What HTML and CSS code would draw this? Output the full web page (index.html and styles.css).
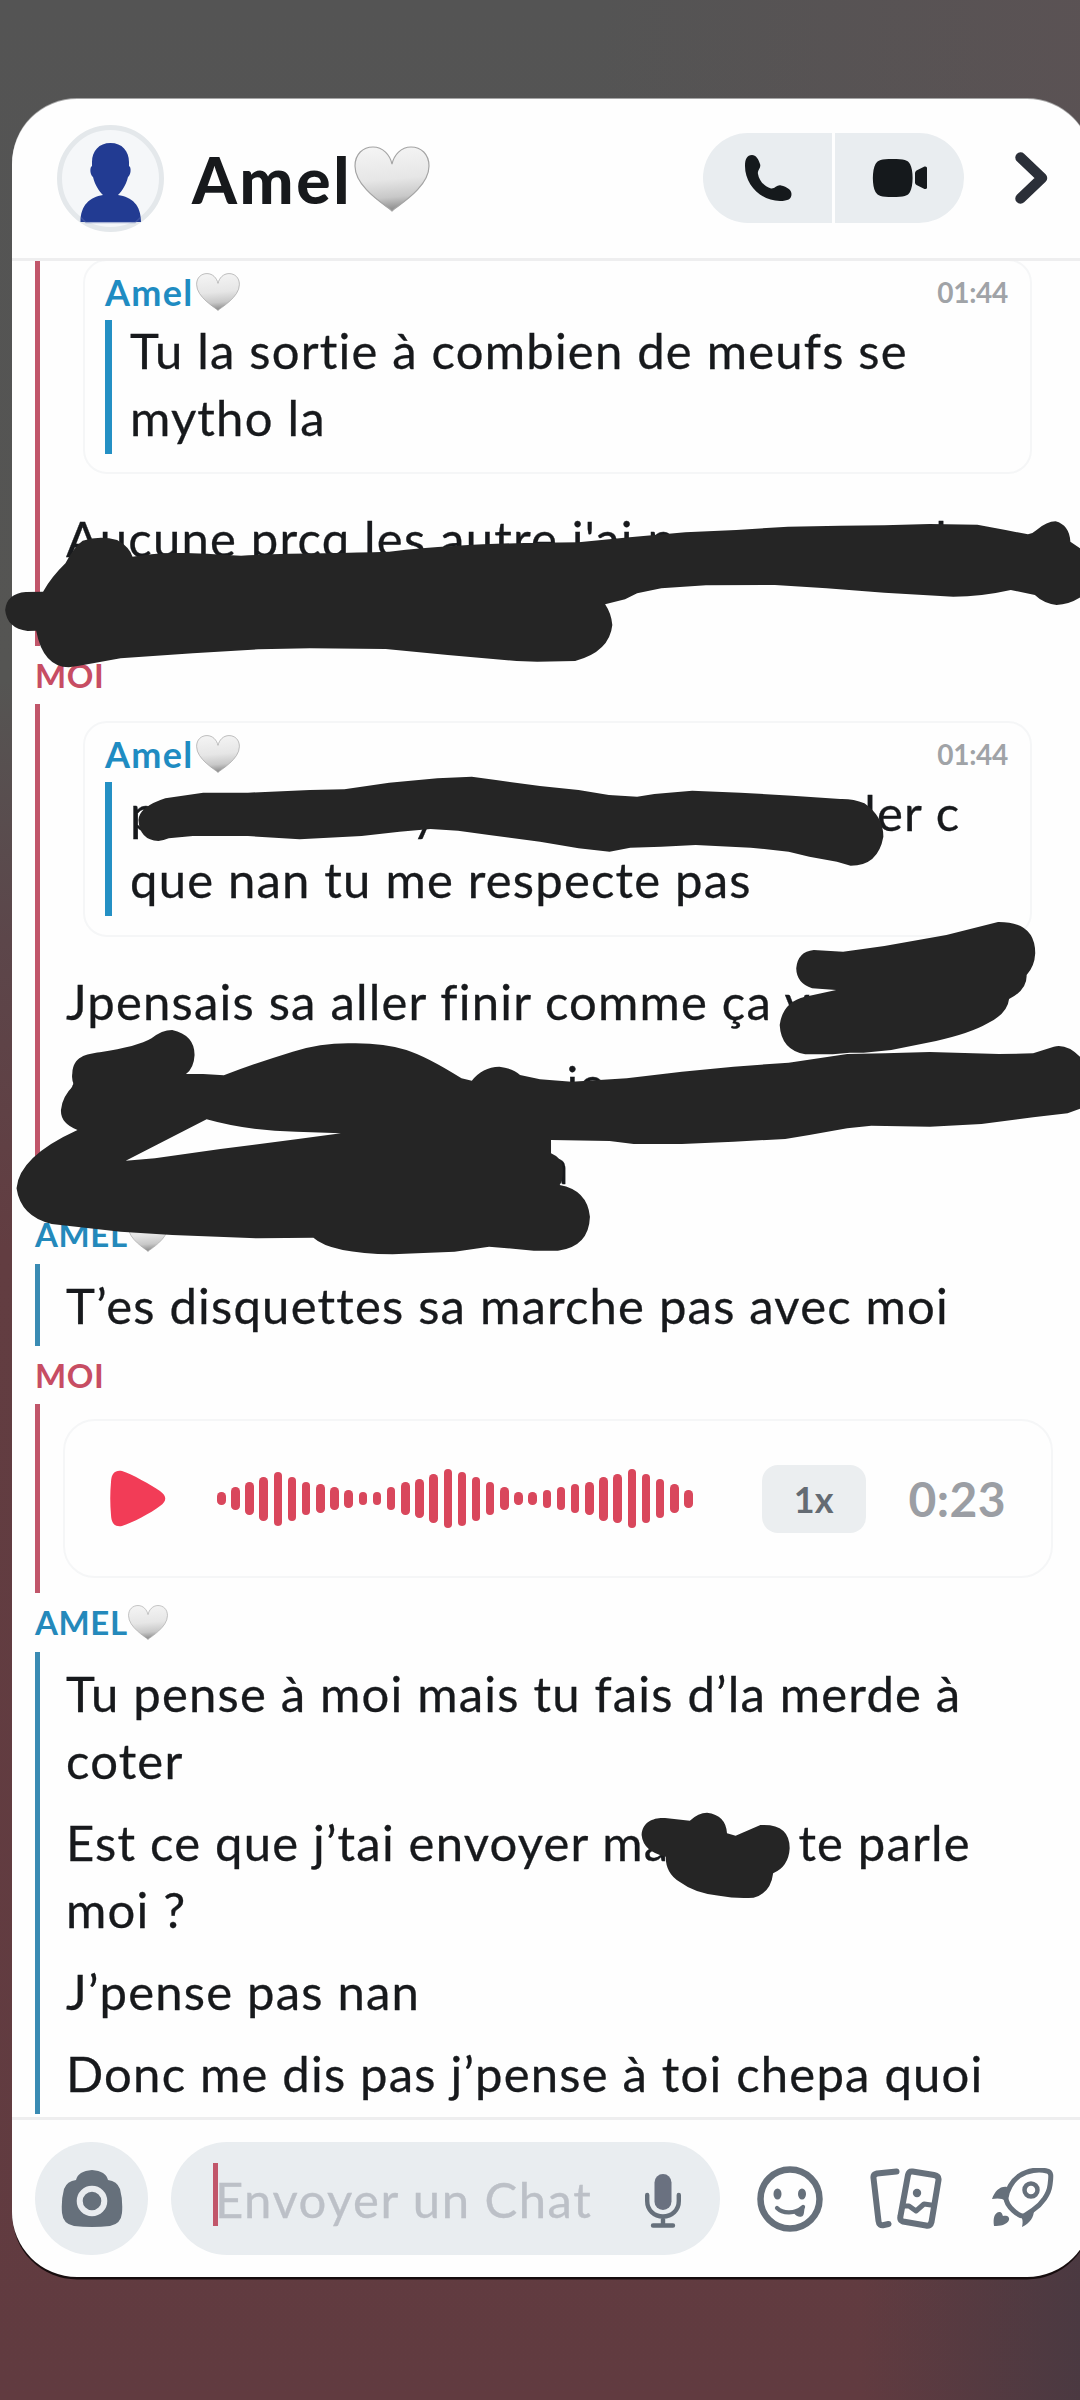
FILE: index.html
```html
<!DOCTYPE html>
<html lang="fr">
<head>
<meta charset="utf-8">
<title>Chat</title>
<link rel="stylesheet" href="styles.css">
</head>
<body>
<svg class="defs" width="0" height="0" aria-hidden="true">
  <defs>
    <linearGradient id="heartFill" x1="0.45" y1="0" x2="0.55" y2="1">
      <stop offset="0" stop-color="#f4f4f4"/>
      <stop offset="0.5" stop-color="#e6e6e6"/>
      <stop offset="0.78" stop-color="#c8c8c8"/>
      <stop offset="1" stop-color="#868686"/>
    </linearGradient>
    <symbol id="heart" viewBox="0 0 76 66" preserveAspectRatio="none">
      <path d="M38 65C33 60 1 42 1 20C1 8 9 1 19 1C29 1 36 9 38 18C40 9 47 1 57 1C67 1 75 8 75 20C75 42 43 60 38 65Z" fill="url(#heartFill)" stroke="#a4a4a4" stroke-width="1.2"/>
    </symbol>
  </defs>
</svg>
<main class="screen">
  <header class="header">
    <svg class="avatar" viewBox="0 0 107 107">
      <circle cx="53.500" cy="53.500" r="51" fill="#f5f7f9" stroke="#e4e8eb" stroke-width="5"/>
      <path d="M53.500 18C65 18 72 26 72 37V41C74.500 42 74 50 71 52C69 60 65 66 61 70C75 72 84 80 84 97H23.500C23.500 80 33 72 46 70C42 66 38 60 36 52C33 50 32.500 42 35 41V37C35 26 42 18 53.500 18Z" fill="#223b92"/>
      <path d="M24 92.500A50 50 0 0 0 29 97.500H78A50 50 0 0 0 83.500 92.500" fill="none" stroke="#5568ad" stroke-width="1.500" opacity=".5"/>
    </svg>
    <h1 class="title">Amel<svg class="heart"><use href="#heart"/></svg></h1>
    <div class="calls">
      <button class="call">
        <svg width="48" height="48" viewBox="0 0 48 48"><path d="M8 1C12 1 14.500 5 16 10C17.500 14 13 16 14 20C15 27 21 33 27 34.500C31 35 33 30.500 37 31.500C43 33 47.500 35.500 47.500 40C47.500 45 44 47 36 47C17 47 1 31 1 12C1 5 3 1 8 1Z" fill="#15191c"/></svg>
      </button>
      <button class="call">
        <svg width="56" height="40" viewBox="0 0 56 40"><path d="M20.500 1C32 1 36 2 38 6C41.500 12 41.500 28 38 34C36 38 32 39 20.500 39C9 39 6 38 3.500 34C0 28 0 12 3.500 6C6 2 9 1 20.500 1Z" fill="#15191c"/><path d="M43 15Q43 13.500 44.500 12.500L52.500 8.500Q55 8 55 10V29.500Q55 31.500 52.500 31L44.500 27Q43 26 43 24.500Z" fill="#15191c"/></svg>
      </button>
    </div>
    <svg class="next" viewBox="0 0 34 52"><path d="M5.500 5.500L27 26L5.500 46.500" fill="none" stroke="#2b2f38" stroke-width="10.500" stroke-linecap="round" stroke-linejoin="round"/></svg>
  </header>

  <section class="chat">
    <div class="group me first">
      <article class="message">
        <div class="quote">
          <div class="quote-head"><b>Amel</b><svg class="heart"><use href="#heart"/></svg><time>01:44</time></div>
          <blockquote><p>Tu la sortie à combien de meufs se<br>mytho la</p></blockquote>
        </div>
        <p>Aucune prcq les autre j'ai p<i class="gap g1"></i>l<br>&nbsp;</p>
      </article>
    </div>

    <h2 class="sender red">MOI</h2>
    <div class="group me">
      <article class="message">
        <div class="quote">
          <div class="quote-head"><b>Amel</b><svg class="heart"><use href="#heart"/></svg><time>01:44</time></div>
          <blockquote><p>p<i class="gap g2"></i>y<i class="gap g3"></i>ler c<br>que nan tu me respecte pas</p></blockquote>
        </div>
        <p>Jpensais sa aller finir comme ça v</p>
      </article>
      <article class="message"><p>A<i class="gap g4"></i>je</p></article>
      <article class="message"><p><i class="gap g5"></i>a</p></article>
    </div>

    <h2 class="sender blue">AMEL<svg class="heart"><use href="#heart"/></svg></h2>
    <div class="group them">
      <article class="message"><p>T’es disquettes sa marche pas avec moi</p></article>
    </div>

    <h2 class="sender red">MOI</h2>
    <div class="group me note">
      <div class="voice">
        <svg class="play" viewBox="0 0 56 57"><path d="M1 12C1.500 3 5 0 12 1C22 4 41 15 50 21C57 26 57 31 50 36C41 43 22 53 12 56C5 57 1.500 54 1 45C0 34 0 23 1 12Z" fill="#f23c57"/></svg>
        <div class="wave">
          <i style="height:13px"></i><i style="height:23px"></i><i style="height:33px"></i><i style="height:44px"></i><i style="height:54px"></i><i style="height:44px"></i><i style="height:33px"></i><i style="height:29px"></i><i style="height:23px"></i><i style="height:18px"></i><i style="height:13px"></i><i style="height:13px"></i><i style="height:23px"></i><i style="height:33px"></i><i style="height:39px"></i><i style="height:49px"></i><i style="height:59px"></i><i style="height:54px"></i><i style="height:44px"></i><i style="height:33px"></i><i style="height:23px"></i><i style="height:13px"></i><i style="height:13px"></i><i style="height:18px"></i><i style="height:23px"></i><i style="height:29px"></i><i style="height:33px"></i><i style="height:44px"></i><i style="height:49px"></i><i style="height:59px"></i><i style="height:49px"></i><i style="height:39px"></i><i style="height:29px"></i><i style="height:18px"></i>
        </div>
        <span class="speed">1x</span>
        <span class="length">0:23</span>
      </div>
    </div>

    <h2 class="sender blue">AMEL<svg class="heart"><use href="#heart"/></svg></h2>
    <div class="group them">
      <article class="message"><p>Tu pense à moi mais tu fais d’la merde à<br>coter</p></article>
      <article class="message"><p>Est ce que j’tai envoyer ma<i class="gap g6"></i>te parle<br>moi ?</p></article>
      <article class="message"><p>J’pense pas nan</p></article>
      <article class="message"><p>Donc me dis pas j’pense à toi chepa quoi</p></article>
    </div>
  </section>

  <footer class="composer">
    <button class="camera">
      <svg width="62" height="57" viewBox="0 0 62 57"><path d="M15 10Q17 1 31 0Q45 1 47 10Q56 11 59 19Q62 30 61 43Q60 54 49 56Q31 58 13 56Q2 54 1 43Q0 30 3 19Q6 11 15 10Z" fill="#66707b"/><circle cx="31" cy="31" r="12.300" fill="none" stroke="#e9ecef" stroke-width="6"/></svg>
    </button>
    <div class="field">
      <span class="caret"></span><span class="placeholder">Envoyer un Chat</span>
      <svg class="mic" viewBox="0 0 36 54"><rect x="9.500" y="0" width="17" height="36" rx="8.500" fill="#6a7180"/><path d="M2.200 21V27C2.200 36 9 42.500 18 42.500S33.800 36 33.800 27V21M18 43V51M8 51.500H28" fill="none" stroke="#66707b" stroke-width="4.400" stroke-linecap="round"/></svg>
    </div>
    <svg class="tool smile" viewBox="0 0 66 66"><circle cx="33" cy="33" r="29.500" fill="none" stroke="#66707b" stroke-width="6.500"/><ellipse cx="20.500" cy="28" rx="4" ry="5.500" fill="#66707b"/><ellipse cx="45" cy="28" rx="4" ry="5.500" fill="#66707b"/><path d="M20 42C26 48 38 48 46 41" fill="none" stroke="#66707b" stroke-width="4.200" stroke-linecap="round"/><path d="M37 46L47 41C46 45 47 51 43 50Q40 50 37 46Z" fill="#66707b" stroke="#66707b" stroke-width="1.500"/></svg>
    <svg class="tool stickers" viewBox="0 0 72 61"><g fill="none" stroke="#66707b" stroke-width="6" stroke-linecap="round" stroke-linejoin="round"><path d="M26.500 3.500L7 5.500Q3 6.500 3.500 10L8.500 53Q9 58 14 57L18.500 56"/><path d="M42.500 3.500L64 7Q69 8 68.500 12L61.500 54Q60.500 58.500 56 57.500L33 53.500Q29.500 52.500 30.500 48L38 7Q39 3 42.500 3.500Z"/><path d="M35 38L39 38L46 43L54 36L61 37" stroke-width="5"/></g><circle cx="47" cy="25" r="4.200" fill="#66707b"/></svg>
    <svg class="tool rocket" viewBox="0 0 62 60"><g fill="none" stroke="#66707b" stroke-width="5"><path d="M27 8C36 2 47 1 55 3C60 4 59 9 58 17C57 26 50 36 41 42L32 48C27 49 14 38 14 30C15 22 20 13 27 8Z" stroke-linejoin="round"/><circle cx="39" cy="22" r="6.500" stroke-width="4.500"/></g><path d="M15 19C8 18 3 23 0 31C5 30 10 30 14 33ZM42 42C42 49 38 55 30 59C31 54 31 51 28 47Z" fill="#66707b"/><path d="M2 58C1 51 2 45 7 44C10 44 10 46 11 48C14 47 18 48 17 52C15 57 8 58 2 58Z" fill="#66707b"/></svg>
  </footer>
</main>

<svg class="strokes" viewBox="0 0 1080 2400" aria-hidden="true">
  <g fill="#252525" fill-rule="evenodd">
    <path transform="translate(0 480) scale(.34439 .33333)" d="M15 390Q20 340 75 336L125 335Q150 290 190 250Q215 200 240 182Q290 165 340 180Q375 200 385 230C500 212 560 220 700 227C850 218 1000 220 1130 215C1300 195 1450 190 1568 188L1680 187L1828 172L1990 157L2138 150L2288 140L2440 137L2568 136L2700 132L2838 134L2920 150L2985 163Q3000 160 3010 150Q3040 124 3065 124Q3105 135 3108 185L3140 208V350Q3105 374 3068 375Q3030 370 3005 345L2935 330Q2850 350 2768 350L2568 338L2400 325L2250 315L2050 316L1920 325L1850 340L1815 358L1757 373Q1775 400 1778 435Q1770 515 1670 543L1560 545L1500 543L1300 525L1120 507L900 505L750 508L560 520L350 535L230 557L200 562Q125 560 105 452L80 453Q20 445 15 390Z"/>
    <path transform="translate(0 480) scale(.34439 .33333)" d="M402 1020Q405 980 480 955L590 938L720 938L900 930L1000 928L1130 908L1270 895L1370 890L1440 900L1568 918L1680 930L1768 945L1850 950L1900 942L2010 932L2150 938L2300 947L2440 957Q2478 956 2510 970Q2565 1010 2565 1070Q2550 1157 2470 1157L2430 1145L2350 1130L2290 1115L2180 1103L2020 1095L1920 1100L1830 1103L1770 1115L1680 1105L1568 1085L1420 1065L1330 1052L1250 1047L1160 1055L1050 1068L870 1078L720 1068L560 1068L490 1075Q475 1081 460 1083Q405 1080 402 1020Z"/>
    <path transform="translate(540 900) scale(.34439 .33333)" d="M744 205Q748 155 795 150L880 155L1000 138L1180 105L1330 66Q1438 65 1438 160Q1436 200 1413 225Q1415 270 1362 297Q1358 340 1300 370Q1250 400 1150 423L1020 450L940 458L900 458L850 463L770 463Q700 450 696 375Q705 305 770 290L860 270L790 265Q745 250 744 205Z"/>
    <path transform="translate(0 920) scale(.34439 .33333)" d="M210 460C212 410 250 402 290 397Q400 380 440 355Q470 330 500 330Q565 345 565 405Q563 445 540 462L590 462L650 466Q740 430 850 395Q930 370 1010 370Q1110 367 1180 390Q1240 410 1340 475L1370 482Q1400 442 1450 440Q1490 445 1510 465L1568 478L1660 485L1820 475L1980 455L2130 440L2290 428L2460 402L2570 400L2700 396L2900 402L3000 400L3060 380Q3100 370 3140 415V565L3100 580L3000 592L2850 612L2700 620L2530 617L2460 625L2350 645L2280 657L2130 665L1980 672L1840 672L1770 663L1600 660V700Q1634 715 1634 745Q1636 780 1625 795Q1705 810 1713 890Q1710 980 1620 992L1550 992L1420 980L1320 995L1140 1003Q960 1000 910 953L750 955L500 945L350 935L150 912Q60 890 48 805Q55 710 225 630Q175 610 177 570Q180 530 215 495Q207 480 210 460ZM600 598Q720 633 860 635L990 640L860 658L640 687L450 715L365 722Z"/>
    <path transform="translate(540 1660) scale(.34439 .33333)" d="M295 525C297 480 340 470 370 475L435 482Q460 458 485 458Q540 465 543 520L568 527L640 495Q725 490 725 565Q722 620 677 640Q670 700 620 713Q570 717 520 707Q450 700 405 665Q365 640 365 590Q300 575 295 525Z"/>
  </g>
</svg>
</body>
</html>
```
FILE: styles.css
```css
* { box-sizing: border-box; }

body {
  position: relative;
  width: 1080px;
  height: 2400px;
  margin: 0;
  overflow: hidden;
  font-family: Lato, "Liberation Sans", sans-serif;
  color: #17191c;
  background:
    linear-gradient(to right, rgba(60, 56, 66, 0) 860px, rgba(60, 56, 66, .6) 1080px) 0 2200px / 1080px 200px no-repeat,
    linear-gradient(to right, rgba(98, 80, 84, 0) 600px, rgba(98, 80, 84, .45) 1080px) 0 0 / 1080px 200px no-repeat,
    linear-gradient(to bottom, #545454 0, #555553 680px, #5c464a 940px, #623d41 1250px, #613b40 2400px);
}

h1, h2, p, blockquote { margin: 0; font-weight: 400; }
button { border: 0; padding: 0; display: flex; align-items: center; justify-content: center; }
svg { display: block; flex: none; }
.defs { position: absolute; }

.screen {
  display: flex;
  flex-direction: column;
  width: 1080px;
  height: 2178px;
  margin: 99px 0 0 12px;
  border-radius: 65px;
  overflow: hidden;
  background: #fefefe;
  box-shadow: 0 3px 0 -.5px #170d0e, 0 -1px 0 #a5a5a5;
}

/* Header */
.header {
  display: flex;
  align-items: center;
  flex: none;
  height: 162px;
  padding: 0 43px 1px 45px;
  border-bottom: 3px solid #eeeeef;
}
.avatar { width: 107px; height: 107px; }
.title {
  display: flex;
  align-items: center;
  flex: 1;
  margin: 2px 0 0 28px;
  font-size: 64px;
  font-weight: 900;
  letter-spacing: 2.700px;
}
.title .heart { width: 76px; height: 66px; margin: 0 0 0 2px; }
.calls { display: flex; gap: 3px; width: 261px; height: 90px; border-radius: 45px; overflow: hidden; }
.call { flex: 1; background: #e9edf0; }
.next { width: 34px; height: 52px; margin-left: 51px; }

/* Conversation */
.chat { flex: none; height: 1856px; overflow: hidden; }
.group { width: 1041px; margin-left: 23px; border-left: 5px solid; }
.me { border-color: #c1566a; }
.them { border-color: #3a8bb3; }
.first { margin-top: -19.500px; }
.message { padding: 8.500px 0 6.500px 26px; }
.message p {
  font-size: 49px;
  line-height: 67px;
  letter-spacing: 1.200px;
  -webkit-text-stroke: .3px;
  white-space: nowrap;
}
.quote {
  width: 949px;
  height: 215.500px;
  margin: 8.500px 0 31px 17px;
  padding: 11px 22px 0 20px;
  border: 2px solid #f5f6f7;
  border-radius: 24px;
}
.quote-head {
  display: flex;
  align-items: center;
  height: 40px;
  margin-bottom: 8px;
  font-size: 36px;
  letter-spacing: 1.300px;
  color: #1f8cc2;
}
.quote-head b { font-weight: 700; }
.quote-head .heart { width: 44px; height: 38px; margin-left: 2px; }
.quote-head time { margin-left: auto; font-size: 28px; font-weight: 700; letter-spacing: -.3px; color: #a0a3a7; }
blockquote { height: 134px; border-left: 7px solid #2490c4; padding-left: 18px; }
blockquote p { position: relative; top: -3px; }
.gap { display: inline-block; }
.g1 { width: 259px; }
.g2 { width: 253px; }
.g3 { width: 426px; }
.g4 { width: 466px; }
.g5 { width: 478px; }
.g6 { width: 129px; }

.sender {
  display: flex;
  align-items: center;
  height: 58.500px;
  margin-left: 23px;
  font-size: 33px;
  font-weight: 700;
  letter-spacing: .6px;
}
.sender .heart { width: 40px; height: 35px; margin-left: 0; }
.red { color: #c74d63; }
.blue { color: #2489bb; }

/* Voice note */
.note { padding: 15px 0; }
.voice {
  display: flex;
  align-items: center;
  width: 990px;
  height: 159px;
  margin-left: 23px;
  padding: 0 45px;
  border: 2px solid #f5f6f7;
  border-radius: 32px;
}
.play { width: 56px; height: 57px; }
.wave { display: flex; align-items: center; gap: 5.667px; margin-left: 51px; }
.wave i { width: 8.500px; border-radius: 4.250px; background: #d9475c; }
.speed {
  display: flex;
  align-items: center;
  justify-content: center;
  width: 104px;
  height: 68px;
  margin-left: 69px;
  border-radius: 16px;
  background: #ebeef0;
  font-size: 36px;
  font-weight: 700;
  color: #646b73;
}
.length { margin-left: auto; font-size: 48px; font-weight: 700; letter-spacing: .4px; color: #9b9ea4; }

/* Composer */
.composer {
  display: flex;
  align-items: flex-start;
  flex: 1;
  padding: 22px 0 0 23px;
  border-top: 3px solid #eeeeef;
}
.camera { width: 113px; height: 113px; border-radius: 50%; background: #e9edf0; }
.field {
  display: flex;
  align-items: center;
  width: 549px;
  height: 113px;
  margin-left: 23px;
  padding: 0 39px 0 42px;
  border-radius: 57px;
  background: #e9edf0;
}
.caret { width: 5px; height: 63px; margin-top: -9px; background: #c1566a; }
.placeholder { flex: 1; margin-left: -3px; font-size: 49px; letter-spacing: 1.500px; color: #bcc0c7; white-space: nowrap; -webkit-text-stroke: .3px; }
.mic { width: 36px; height: 54px; margin-top: 4px; }
.smile { width: 66px; height: 66px; margin: 24px 0 0 37px; }
.stickers { width: 72px; height: 61px; margin: 26px 0 0 47px; }
.rocket { width: 62px; height: 60px; margin: 26px 0 0 50px; }

/* Marker strokes drawn over the conversation */
.strokes { position: absolute; left: 0; top: 0; width: 1080px; height: 2400px; }
```
